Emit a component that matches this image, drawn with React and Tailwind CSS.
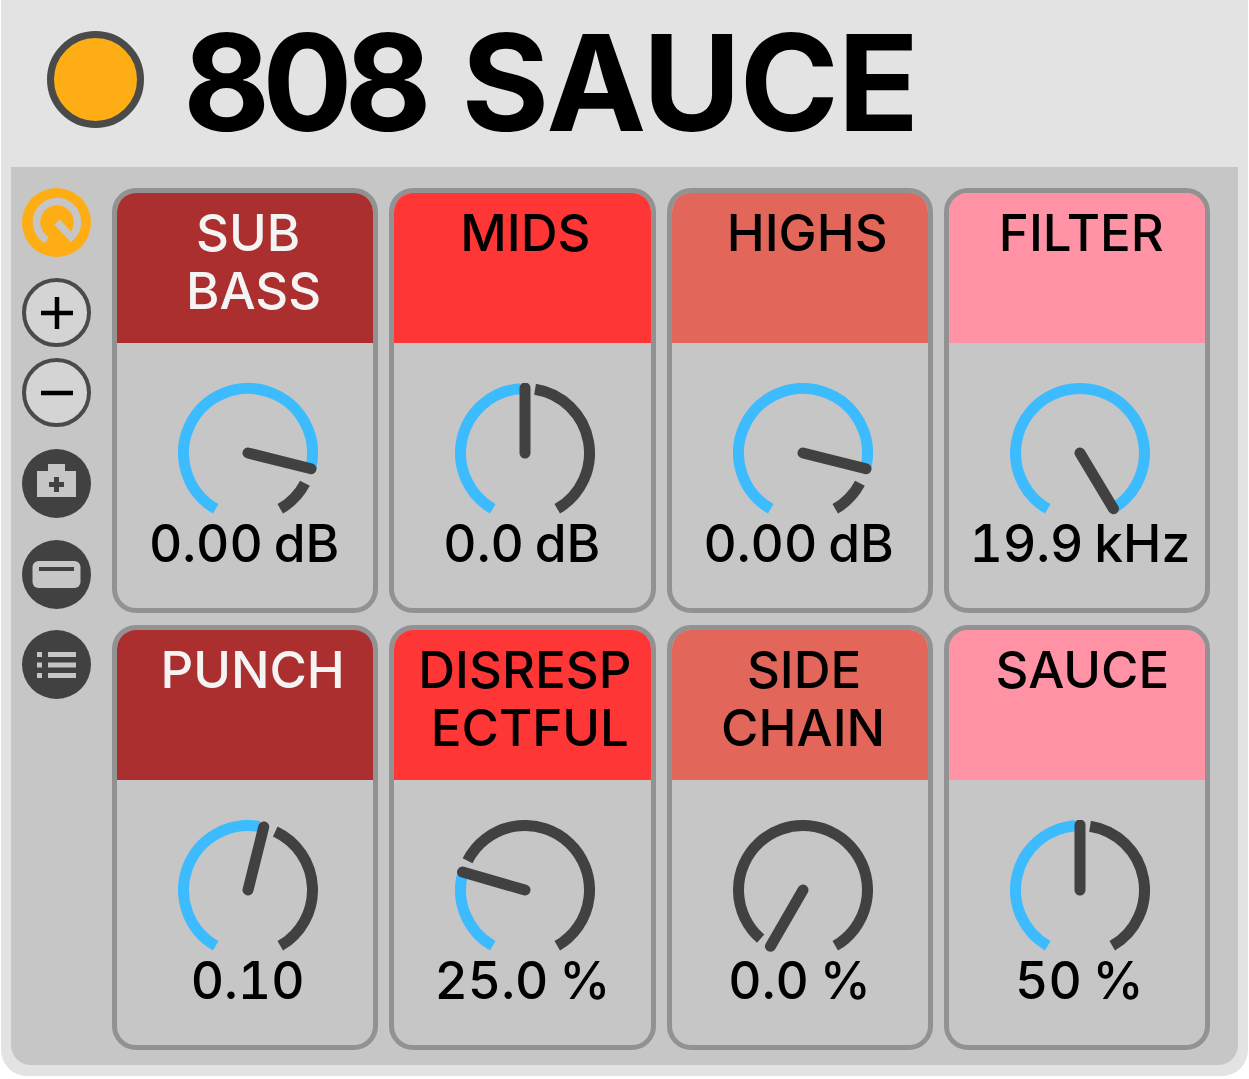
const CX = 70, CY = 70, R = 64.5;

const point = (deg, r = R) => {
  const a = (deg * Math.PI) / 180;
  return [CX + r * Math.sin(a), CY - r * Math.cos(a)];
};

const arc = (from, to) => {
  const [x1, y1] = point(from);
  const [x2, y2] = point(to);
  const large = to - from > 180 ? 1 : 0;
  return `M${x1} ${y1}A${R} ${R} 0 ${large} 1 ${x2} ${y2}`;
};

/* needle angle, and where the blue and dark arcs stop around it */
const Knob = ({ angle, blueTo, darkFrom }) => {
  const [nx, ny] = point(angle, 65);
  return (
    <svg width="140" height="140" viewBox="0 0 140 140" className="block">
      {blueTo !== undefined && <path d={arc(-150, blueTo)} fill="none" stroke="#3dbbff" strokeWidth="11" />}
      {darkFrom !== undefined && <path d={arc(darkFrom, 150)} fill="none" stroke="#414141" strokeWidth="11" />}
      <line x1={CX} y1={CY} x2={nx} y2={ny} stroke="#414141" strokeWidth="11" strokeLinecap="round" />
    </svg>
  );
};

const PARAMS = [
  { lines: [["SUB", "ml-[6px]"], ["BASS", "ml-[17px]"]], bg: "bg-[#ac2f30]", fg: "text-[#f4f4f4]", value: "0.00 dB", valueX: "ml-[-2px]", knob: { angle: 104, blueTo: 104, darkFrom: 118 } },
  { lines: [["MIDS", "ml-[6px]"]], bg: "bg-[#ff3636]", fg: "text-black", value: "0.0 dB", valueX: "ml-[-1px]", knob: { angle: 0, blueTo: -4, darkFrom: 9 } },
  { lines: [["HIGHS", "ml-[15px]"]], bg: "bg-[#e2675a]", fg: "text-black", value: "0.00 dB", valueX: "ml-[-2px]", knob: { angle: 104, blueTo: 104, darkFrom: 118 } },
  { lines: [["FILTER", "ml-[9px]"]], bg: "bg-[#ff92a5]", fg: "text-black", value: "19.9 kHz", valueX: "ml-[6px]", knob: { angle: 149, blueTo: 150 } },
  { lines: [["PUNCH", "ml-[15px]"]], bg: "bg-[#ac2f30]", fg: "text-[#f4f4f4]", value: "0.10", valueX: "ml-[5px]", knob: { angle: 14, blueTo: 10, darkFrom: 25 } },
  { lines: [["DISRESP", "ml-[5px]"], ["ECTFUL", "ml-[15px]"]], bg: "bg-[#ff3636]", fg: "text-black", value: "25.0 %", valueX: "", knob: { angle: -74, blueTo: -74, darkFrom: -63 } },
  { lines: [["SIDE", "ml-[9px]"], ["CHAIN", "ml-[7px]"]], bg: "bg-[#e2675a]", fg: "text-black", value: "0.0 %", valueX: "", knob: { angle: -150, darkFrom: -139 } },
  { lines: [["SAUCE", "ml-[11px]"]], bg: "bg-[#ff92a5]", fg: "text-black", value: "50 %", valueX: "ml-[5px]", knob: { angle: 0, blueTo: -4, darkFrom: 9 } },
];

const ParamCard = ({ lines, bg, fg, value, valueX, knob }) => (
  <div className="h-[425px] rounded-[24px] border-[5px] border-[#929292] overflow-hidden flex flex-col items-center">
    <div className={`w-full h-[150px] shrink-0 pt-[11px] flex flex-col items-center font-[550] text-[51px] leading-[58px] ${bg} ${fg}`}>
      {lines.map(([text, offset]) => <div key={text} className={offset}>{text}</div>)}
    </div>
    <div className="mt-[40px] ml-[6px]"><Knob {...knob} /></div>
    <div className={`mt-[-10px] text-[51.5px] leading-[60px] font-[450] text-black tabular-nums [word-spacing:-3px] ${valueX}`}>{value}</div>
  </div>
);

const SideButton = ({ children }) => (
  <div className="w-[69px] h-[69px] rounded-full bg-[#414141]">
    <svg width="69" height="69" viewBox="0 0 69 69" className="block">{children}</svg>
  </div>
);

const Sidebar = () => (
  <div className="w-[69px] shrink-0 flex flex-col">
    <svg width="69" height="69" viewBox="0 0 69 69" className="block">
      <circle cx="34.5" cy="34.5" r="34.5" fill="#ffad14" />
      <path d="M25 52A20.5 20.5 0 1 1 49 49L35 34" fill="none" stroke="#c6c6c6" strokeWidth="7.5" />
    </svg>
    <div className="mt-[21px] w-[69px] h-[69px] rounded-full bg-[#d4d4d4] border-[4px] border-[#4a4a4a] flex items-center justify-center">
      <svg width="34" height="34" viewBox="0 0 34 34"><path d="M1 17H33M17 1V33" stroke="#000" strokeWidth="4.5" /></svg>
    </div>
    <div className="mt-[11px] w-[69px] h-[69px] rounded-full bg-[#d4d4d4] border-[4px] border-[#4a4a4a] flex items-center justify-center">
      <svg width="34" height="34" viewBox="0 0 34 34"><path d="M1 17H33" stroke="#000" strokeWidth="4.5" /></svg>
    </div>
    <div className="mt-[22px]">
      <SideButton>
        <path fillRule="evenodd" fill="#c6c6c6" d="M15 22H26V15H43V22H54V48H15ZM32 28V33H27V38H32V43H37V38H42V33H37V28Z" />
      </SideButton>
    </div>
    <div className="mt-[22px]">
      <SideButton>
        <rect x="10.5" y="21" width="48" height="27" rx="6" fill="#c6c6c6" />
        <path d="M17 29H52" stroke="#414141" strokeWidth="4" />
      </SideButton>
    </div>
    <div className="mt-[21px]">
      <SideButton>
        <path fill="#c6c6c6" d="M15 22H20V27H15ZM15 32.5H20V37.5H15ZM15 43H20V48H15ZM26 22H54V27H26ZM26 32.5H54V37.5H26ZM26 43H54V48H26Z" />
      </SideButton>
    </div>
  </div>
);

export default function App() {
  return (
    <div className="w-[1249px] h-[1079px] bg-white font-['Inter',sans-serif] overflow-hidden">
      <div className="w-[1247px] ml-px h-[1076px] bg-[#e3e3e3] rounded-b-[26px] flex flex-col">
        <header className="h-[167px] shrink-0 flex items-center pl-[46px] pb-[4px]">
          <div className="w-[97px] h-[97px] mt-[-4px] rounded-full bg-[#ffad14] border-[7px] border-[#4a4a4a]" />
          <h1 className="ml-[39px] text-[134px] leading-none font-bold text-black tracking-[-1px] whitespace-nowrap">
            <span className="tracking-[-8px] mr-[7px]">808</span> SAUCE
          </h1>
        </header>
        <main className="mx-[10px] h-[898px] bg-[#c6c6c6] rounded-b-[20px] flex pl-[11px] pr-[28px] pt-[21px] gap-[21px]">
          <Sidebar />
          <div className="flex-1 grid grid-cols-4 gap-x-[11px] gap-y-[12px] content-start">
            {PARAMS.map((p) => <ParamCard key={p.value + p.lines[0][0]} {...p} />)}
          </div>
        </main>
      </div>
    </div>
  );
}
